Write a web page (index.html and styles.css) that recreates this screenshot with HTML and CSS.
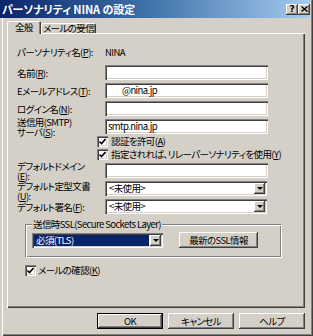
FILE: index.html
```html
<!DOCTYPE html>
<html lang="ja">
<head>
<meta charset="utf-8">
<title>パーソナリティ NINA の設定</title>
<link rel="stylesheet" href="styles.css">
</head>
<body>
<div class="window">
  <div class="titlebar">
    <span class="title">パーソナリティ NINA の設定</span>
    <div class="tb-btns">
      <span class="tb-btn">?</span>
      <span class="tb-btn"><svg width="7" height="6" viewBox="0 0 7 6"><path d="M0.5 0.5 L6.5 5.5 M6.5 0.5 L0.5 5.5" stroke="#000" stroke-width="1.4"/></svg></span>
    </div>
  </div>
  <div class="client">
    <div class="tabs">
      <div class="tab active">全般</div>
      <div class="tab">メールの受信</div>
    </div>
    <div class="panel">
      <div class="row persona"><span class="lbl">パーソナリティ名(<u>P</u>):</span><span class="val">NINA</span></div>
      <div class="row gap6"><span class="lbl">名前(<u>R</u>):</span><span class="field"></span></div>
      <div class="row"><span class="lbl">Eメールアドレス(<u>T</u>):</span><span class="field indent">@nina.jp</span></div>
      <div class="row"><span class="lbl">ログイン名(<u>N</u>):</span><span class="field"></span></div>
      <div class="row"><span class="lbl">送信用(SMTP)<br>サーバ(<u>S</u>):</span><span class="field">smtp.nina.jp</span></div>
      <div class="cbrow first"><span class="cb"><svg width="7" height="7" viewBox="0 0 7 7"><path d="M0.5 3.5 L2.5 5.5 L6.5 1" fill="none" stroke="#000" stroke-width="1.6"/></svg></span><span>認証を許可(<u>A</u>)</span></div>
      <div class="cbrow"><span class="cb"><svg width="7" height="7" viewBox="0 0 7 7"><path d="M0.5 3.5 L2.5 5.5 L6.5 1" fill="none" stroke="#000" stroke-width="1.6"/></svg></span><span>指定されれば、リレーパーソナリティを使用(<u>Y</u>)</span></div>
      <div class="row gap2"><span class="lbl">デフォルトドメイン<br>(<u>E</u>):</span><span class="field"></span></div>
      <div class="row"><span class="lbl top">デフォルト定型文書<br>(<u>U</u>):</span><span class="select"><span class="seltext">&lt;未使用&gt;</span><span class="arrow"><i></i></span></span></div>
      <div class="row"><span class="lbl">デフォルト署名(<u>F</u>):</span><span class="select"><span class="seltext">&lt;未使用&gt;</span><span class="arrow"><i></i></span></span></div>
      <fieldset class="group">
        <legend>送信時SSL(Secure Sockets Layer)</legend>
        <div class="ssl-row">
          <span class="select tls"><span class="seltext hl">必須(TLS)</span><span class="arrow"><i></i></span></span>
          <span class="btn ssl">最新のSSL情報</span>
        </div>
      </fieldset>
      <div class="cbrow last"><span class="cb"><svg width="7" height="7" viewBox="0 0 7 7"><path d="M0.5 3.5 L2.5 5.5 L6.5 1" fill="none" stroke="#000" stroke-width="1.6"/></svg></span><span>メールの確認(<u>K</u>)</span></div>
    </div>
    <div class="buttons">
      <span class="btn default">OK</span>
      <span class="btn">キャンセル</span>
      <span class="btn">ヘルプ</span>
    </div>
  </div>
</div>
</body>
</html>
```
FILE: styles.css
```css
* { box-sizing: border-box; }
html, body { margin: 0; padding: 0; }
body {
  width: 313px;
  height: 336px;
  overflow: hidden;
  background: #d4d0c8;
  font-family: "Noto Sans CJK JP", "Noto Sans", sans-serif;
  font-size: 9.5px;
  letter-spacing: -0.6px;
  font-feature-settings: "palt";
  color: #000;
}
u { text-decoration: underline; text-underline-offset: 1px; }

.window {
  width: 313px;
  height: 336px;
  display: flex;
  flex-direction: column;
  background: #d4d0c8;
  box-shadow: inset 2px 0 #d4d0c8, inset 3px 0 #fff, inset -1px -1px #404040, inset -2px -2px #808080;
}

.titlebar {
  height: 18px;
  margin-right: 3px;
  flex: none;
  display: flex;
  align-items: center;
  justify-content: space-between;
  padding-left: 2px;
  background: linear-gradient(to right, #0a246a, #3a6ea5 45%, #a6caf0);
}
.title {
  color: #fff;
  font-weight: bold;
  font-size: 11px;
  letter-spacing: -0.1px;
  line-height: 18px;
  white-space: nowrap;
}
.tb-btns { display: flex; }
.tb-btn {
  width: 12px;
  height: 11px;
  display: flex;
  align-items: center;
  justify-content: center;
  background: #d4d0c8;
  box-shadow: inset -1px -1px #404040, inset 1px 1px #fff, inset -2px -2px #808080;
  font-family: "DejaVu Sans", sans-serif;
  font-size: 9px;
  letter-spacing: 0;
  font-weight: bold;
  line-height: 11px;
}

.client {
  flex: 1;
  display: flex;
  flex-direction: column;
  padding: 3px 8px 0 7px;
}

.tabs {
  display: flex;
  align-items: flex-end;
  height: 12px;
  flex: none;
}
.tab {
  height: 10px;
  width: 55px;
  display: flex;
  align-items: center;
  justify-content: center;
  line-height: 10px;
  white-space: nowrap;
  border-radius: 2px 2px 0 0;
  box-shadow: inset 1px 1px #fff, inset -1px 0 #404040, inset -2px 0 #808080;
  background: #d4d0c8;
}
.tab.active {
  width: 34px;
  height: 13px;
  margin-bottom: -1px;
  padding-bottom: 1px;
  position: relative;
  z-index: 1;
}

.panel {
  height: 275px;
  flex: none;
  display: flex;
  flex-direction: column;
  padding: 12px 0 0 10px;
  background: #d4d0c8;
  box-shadow: inset 1px 1px #fff, inset -1px -1px #404040, inset -2px -2px #808080;
}

.row {
  display: flex;
  align-items: center;
  height: 15px;
  margin-top: 3px;
  flex: none;
}
.row.persona { height: 14px; margin-top: 0; }
.row.gap6 { margin-top: 6px; }
.row.gap2 { margin-top: 2px; }
.lbl {
  width: 88px;
  flex: none;
  line-height: 10px;
  white-space: nowrap;
}
.lbl.top { align-self: flex-start; margin-top: 0; }
.val { line-height: 14px; }

.field {
  width: 163px;
  height: 15px;
  padding: 0 3px;
  line-height: 15px;
  background: #fff;
  box-shadow: inset 1px 1px #808080, inset 2px 2px #404040, inset -1px -1px #fff, inset -2px -2px #d4d0c8;
  white-space: nowrap;
}
.field.indent { padding-left: 17px; }

.select {
  width: 162px;
  height: 15px;
  display: flex;
  align-items: center;
  justify-content: space-between;
  padding: 2px;
  background: #fff;
  box-shadow: inset 1px 1px #808080, inset 2px 2px #404040, inset -1px -1px #fff, inset -2px -2px #d4d0c8;
}
.seltext { padding-left: 2px; line-height: 11px; white-space: nowrap; }
.arrow {
  width: 11px;
  height: 11px;
  flex: none;
  display: flex;
  align-items: center;
  justify-content: center;
  background: #d4d0c8;
  box-shadow: inset -1px -1px #404040, inset 1px 1px #fff, inset -2px -2px #808080;
}
.arrow i {
  width: 0;
  height: 0;
  border-left: 3px solid transparent;
  border-right: 3px solid transparent;
  border-top: 3px solid #000;
}

.cbrow {
  display: flex;
  align-items: center;
  gap: 3px;
  height: 13px;
  margin-left: 80px;
  flex: none;
  white-space: nowrap;
  line-height: 11px;
}
.cbrow.first { margin-top: 1px; }
.cbrow.last { margin-left: 8px; margin-top: 6px; gap: 2px; }
.cb {
  width: 11px;
  height: 11px;
  flex: none;
  display: flex;
  align-items: center;
  justify-content: center;
  background: #fff;
  box-shadow: inset 1px 1px #808080, inset 2px 2px #404040, inset -1px -1px #fff, inset -2px -2px #d4d0c8;
}

.group {
  margin: 4px 0 0 8px;
  width: 257px;
  padding: 2px 0 9px 6px;
  border: 1px solid #808080;
  border-right-color: #fff;
  border-bottom-color: #fff;
  box-shadow: inset 1px 1px #fff, inset -1px -1px #808080;
  flex: none;
}
.group legend {
  padding: 0 1px;
  line-height: 12px;
  background: #d4d0c8;
  white-space: nowrap;
}
.ssl-row {
  display: flex;
  align-items: center;
  gap: 16px;
}
.select.tls { width: 131px; }
.seltext.hl {
  flex: 1;
  height: 11px;
  margin-right: 1px;
  background: #0a246a;
  color: #fff;
}

.btn {
  width: 66px;
  height: 16px;
  display: flex;
  align-items: center;
  justify-content: center;
  background: #d4d0c8;
  box-shadow: inset -1px -1px #404040, inset 1px 1px #fff, inset -2px -2px #808080;
  white-space: nowrap;
  line-height: 12px;
}
.btn.ssl { width: 79px; }
.btn.default {
  border: 1px solid #000;
}

.buttons {
  display: flex;
  justify-content: flex-end;
  gap: 5px;
  margin-top: 5px;
  flex: none;
}
```
